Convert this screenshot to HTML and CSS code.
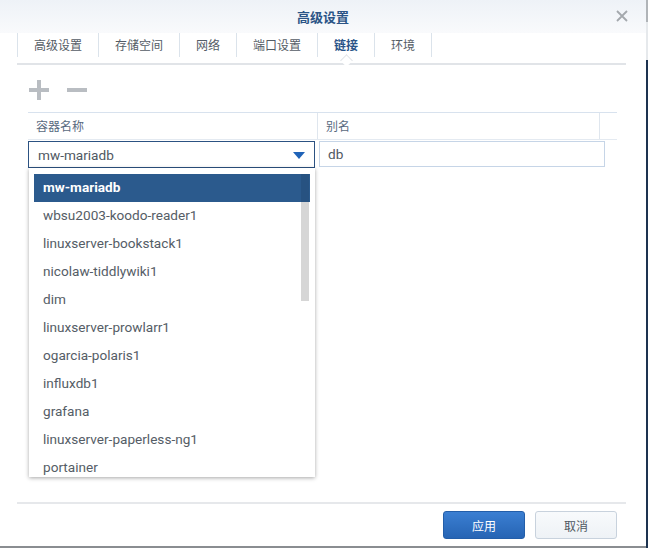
FILE: index.html
```html
<!DOCTYPE html>
<html>
<head>
<meta charset="utf-8">
<link rel="stylesheet" href="styles.css">
</head>
<body>
<div class="dialog">
  <div class="titlebar">
    <span></span>
    <span class="title">高级设置</span>
    <span class="close"><svg width="12" height="12" viewBox="0 0 12 12"><path d="M1 1L11 11M11 1L1 11" stroke="#a4a8ad" stroke-width="1.8"/></svg></span>
  </div>
  <div class="tabs">
    <div class="tab">高级设置</div>
    <div class="tab">存储空间</div>
    <div class="tab">网络</div>
    <div class="tab">端口设置</div>
    <div class="tab active">链接</div>
    <div class="tab">环境</div>
  </div>
  <div class="toolbar">
    <svg class="tool" width="20" height="20" viewBox="0 0 20 20"><path d="M0 10H20M10 0V20" stroke="#b9bdc2" stroke-width="4"/></svg>
    <svg class="tool" width="20" height="20" viewBox="0 0 20 20"><path d="M0 10H20" stroke="#b9bdc2" stroke-width="4"/></svg>
  </div>
  <div class="grid">
    <div class="ghead">
      <div class="hcell c1">容器名称</div>
      <div class="hcell c2">别名</div>
      <div class="hcell c3"></div>
    </div>
    <div class="grow">
      <div class="combo"><span>mw-mariadb</span><svg width="12" height="7" viewBox="0 0 12 7"><path d="M0 0H12L6 7Z" fill="#1f63b8"/></svg></div>
      <div class="input">db</div>
    </div>
    <div class="list">
      <div class="scroll"></div>
      <div class="item sel">mw-mariadb</div>
      <div class="item">wbsu2003-koodo-reader1</div>
      <div class="item">linuxserver-bookstack1</div>
      <div class="item">nicolaw-tiddlywiki1</div>
      <div class="item">dim</div>
      <div class="item">linuxserver-prowlarr1</div>
      <div class="item">ogarcia-polaris1</div>
      <div class="item">influxdb1</div>
      <div class="item">grafana</div>
      <div class="item">linuxserver-paperless-ng1</div>
      <div class="item">portainer</div>
    </div>
  </div>
  <div class="spacer"></div>
  <div class="footer">
    <button class="btn primary">应用</button>
    <button class="btn">取消</button>
  </div>
</div>
<div class="edge"></div>
</body>
</html>
```
FILE: styles.css
```css
html, body {
  margin: 0;
  padding: 0;
}
body {
  width: 648px;
  height: 548px;
  overflow: hidden;
  background: #ffffff;
  font-family: Roboto, "Noto Sans CJK SC", sans-serif;
  position: relative;
}
.dialog {
  width: 646px;
  height: 546px;
  display: flex;
  flex-direction: column;
  background: #fff;
}
.titlebar {
  height: 33px;
  display: grid;
  grid-template-columns: 1fr auto 1fr;
  align-items: center;
  background: linear-gradient(#eef2f7, #f9fafc);
}
.title {
  font-family: "Noto Sans CJK SC", sans-serif;
  font-size: 13px;
  font-weight: 700;
  color: #2b5486;
}
.close {
  justify-self: end;
  margin-right: 18px;
  display: flex;
  margin-top: -2px;
}
.tabs {
  margin: 0 20px 0 17px;
  height: 30px;
  display: flex;
  border-bottom: 2px solid #e1e4e8;
  position: relative;
}
.tab {
  font-family: "Noto Sans CJK SC", sans-serif;
  font-size: 12px;
  color: #545c66;
  padding: 0 16px;
  border-left: 1px solid #dbe3eb;
  height: 24px;
  line-height: 24px;
  position: relative;
}
.tab:last-child {
  border-right: 1px solid #dbe3eb;
}
.tab.active {
  color: #2a5488;
  font-weight: 700;
}
.tab.active::after {
  content: "";
  position: absolute;
  left: 50%;
  bottom: -8px;
  width: 8px;
  height: 8px;
  margin-left: -4px;
  background: #fff;
  border-left: 1px solid #e1e4e8;
  border-top: 1px solid #e1e4e8;
  transform: rotate(45deg);
}
.toolbar {
  height: 47px;
  display: flex;
  align-items: center;
  gap: 18px;
  padding-left: 29px;
  padding-top: 3px;
  box-sizing: border-box;
}
.tool {
  display: block;
}
.grid {
  margin-left: 28px;
  width: 589px;
  position: relative;
}
.ghead {
  display: flex;
  height: 26px;
  border-top: 1px solid #d8e2ee;
  border-bottom: 1px solid #e4eaf1;
}
.hcell {
  font-family: "Noto Sans CJK SC", sans-serif;
  font-size: 12px;
  color: #596a80;
  line-height: 26px;
  padding-left: 8px;
  box-sizing: border-box;
}
.c1 { width: 289px; }
.c2 { width: 283px; border-left: 1px solid #dfe6ee; border-right: 1px solid #dfe6ee; }
.c3 { flex: 1; }
.grow {
  display: flex;
  padding-top: 1px;
  gap: 4px;
}
.combo {
  width: 287px;
  height: 27px;
  box-sizing: border-box;
  border: 1px solid #2c5282;
  display: flex;
  align-items: center;
  justify-content: space-between;
  padding: 0 9px 0 9px;
  font-size: 13.6px;
  color: #4f5862;
}
.combo svg {
  margin-top: 2px;
}
.input {
  width: 286px;
  height: 26px;
  box-sizing: border-box;
  border: 1px solid #c6d5e7;
  font-size: 13.6px;
  color: #4f5862;
  line-height: 24px;
  padding-left: 8px;
}
.list {
  position: absolute;
  left: 1px;
  top: 56px;
  width: 286px;
  height: 309px;
  box-sizing: border-box;
  background: #fff;
  box-shadow: 0 1px 4px rgba(0,0,0,0.35);
  padding: 6px 5px 0 5px;
  overflow: hidden;
}
.scroll {
  position: absolute;
  right: 6px;
  top: 6px;
  width: 8px;
  height: 127px;
  background: #d6d6d6;
}
.item {
  position: relative;
  height: 28px;
  line-height: 26px;
  padding-left: 9px;
  font-size: 13.6px;
  color: #555d66;
}
.item.sel {
  background: #2b5a8d;
  color: #fff;
  font-weight: 700;
}
.item.sel::after {
  content: "";
  position: absolute;
  right: 1px;
  top: 0;
  width: 8px;
  height: 28px;
  background: rgba(0,0,0,0.08);
}
.spacer {
  flex: 1;
}
.footer {
  margin: 0 20px 0 17px;
  border-top: 2px solid #e6e8eb;
  height: 44px;
  box-sizing: border-box;
  display: flex;
  justify-content: flex-end;
  align-items: flex-start;
  gap: 10px;
  padding-top: 7px;
  padding-right: 9px;
}
.btn {
  width: 82px;
  height: 28px;
  border-radius: 3px;
  font-family: "Noto Sans CJK SC", sans-serif;
  font-size: 12px;
  border: 1px solid #c8d2dd;
  background: linear-gradient(#f8fafc, #eef2f6);
  color: #4f5862;
  padding: 0;
}
.btn.primary {
  background: linear-gradient(#3b7fd2, #2664b4);
  border-color: #235ea9;
  color: #fff;
}
.edge {
  position: absolute;
  left: 0;
  bottom: 0;
  width: 648px;
  height: 2px;
  background: #8a8d91;
}
.edge::after {
  content: "";
  position: absolute;
  right: 0;
  bottom: 0;
  width: 2px;
  height: 548px;
  background: linear-gradient(#b0b4b8 0, #b0b4b8 22px, #e6e9ec 22px, #e6e9ec 60px, #1d3350 60px);
}
```
